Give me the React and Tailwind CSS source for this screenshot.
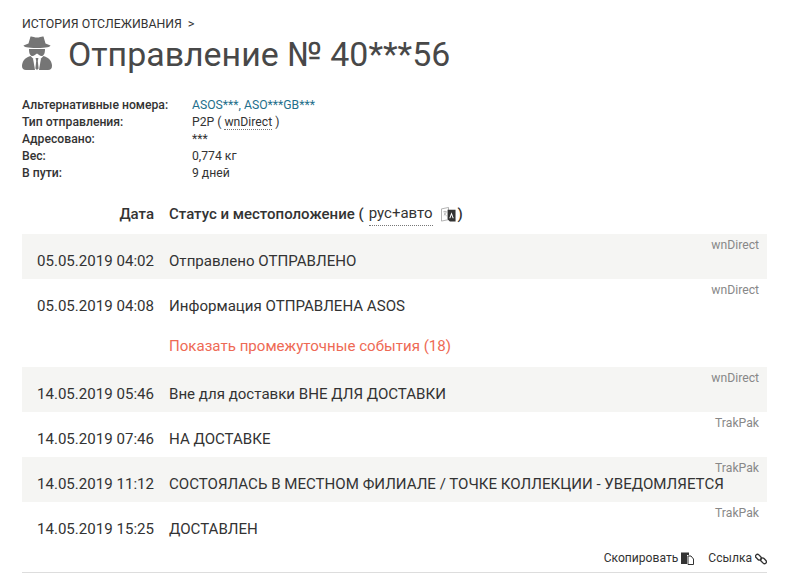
const sans = "font-['Roboto','Liberation_Sans',sans-serif]";

const info = [
  ['Альтернативные номера:', <span className="text-[#1f6f8b]">ASOS***, ASO***GB***</span>],
  ['Тип отправления:', <span>P2P ( <span className="border-b border-dotted border-[#777]">wnDirect</span> )</span>],
  ['Адресовано:', '***'],
  ['Вес:', '0,774 кг'],
  ['В пути:', '9 дней'],
];

const Row = ({ date, text, carrier, shaded }) => (
  <div className={`relative flex h-[45px] items-end pb-[6px] text-[15.08px] text-[#333] ${shaded ? 'bg-[#f5f5f3]' : ''}`}>
    <div className="w-[132px] text-right">{date}</div>
    <div className="ml-[15px]">{text}</div>
    <div className="absolute right-2 top-[2px] text-[12.2px] text-[#888]">{carrier}</div>
  </div>
);

const SpyIcon = () => (
  <svg viewBox="0 0 30 34" className="mb-[5px] h-[34px] w-[30px]" fill="#757575">
    {/* hat */}
    <path d="M8.5 0.5 C10 0 12.5 1.5 15 1.5 C17.5 1.5 20 0 21.5 0.5 L23.5 7.5 L28.5 9.5 C28 11 25 12 15 12 C5 12 2 11 1.5 9.5 L6.5 7.5 Z" />
    {/* glasses and face */}
    <path d="M7 13 H23 C23 16 22.5 19.5 20 20 C18 20.3 16.5 18.5 15 17.5 C13.5 18.5 12 20.3 10 20 C7.5 19.5 7 16 7 13 Z" />
    {/* coat */}
    <path d="M8.5 20 C2.5 21.5 0 26 0 30 C0 32.5 1.5 34 4 34 H13 L11 22.5 Z" />
    <path d="M21.5 20 C27.5 21.5 30 26 30 30 C30 32.5 28.5 34 26 34 H17 L19 22.5 Z" />
    {/* tie */}
    <path d="M13.6 22 H16.4 L15.8 25 L16.6 32.5 L15 34 L13.4 32.5 L14.2 25 Z" />
  </svg>
);

const TranslateIcon = () => (
  <svg viewBox="0 0 16 16" className="h-[15px] w-[15px]">
    <path d="M0.5 2 L8 0.5 V13.5 L0.5 15 Z" fill="#fff" stroke="#999" strokeWidth="0.8" />
    <path d="M2.5 5 H6 M4.2 4 V5 M3 9 C4.5 8 5.5 6.5 5.5 5 M3.5 6 C4 8 5 9 6 9.5" stroke="#999" strokeWidth="0.7" fill="none" />
    <path d="M7 3 H15.5 V15.5 H9.5 L7 13 Z" fill="#333" />
    <path d="M11.2 5.5 L13.6 12 H12.4 L11.2 8.6 L10 12 H8.8 Z" fill="#fff" />
  </svg>
);

const CopyIcon = () => (
  <svg viewBox="0 0 13 13" className="h-[13px] w-[13px]">
    <path d="M0 0.5 H8 V3 H6 V12 H0 Z" fill="#333" />
    <path d="M7 4 H10 L12.5 7 V12.5 H7 Z" fill="#fff" stroke="#333" strokeWidth="1" />
  </svg>
);

const LinkIcon = () => (
  <svg viewBox="0 0 13 13" className="ml-[3px] h-[12px] w-[12px]" fill="none" stroke="#333" strokeWidth="1.5">
    <rect x="0.2" y="2.4" width="7" height="4.2" rx="2.1" transform="rotate(45 3.7 4.5)" />
    <rect x="5.8" y="6.4" width="7" height="4.2" rx="2.1" transform="rotate(45 9.3 8.5)" />
  </svg>
);

export default function App() {
  return (
    <div className={`${sans} h-[586px] w-[790px] overflow-hidden bg-white pl-[22px] pr-[23px] pt-[15px] text-[#333]`}>
      <div className="flex h-[18px] items-center text-[12.3px] text-[#333]">
        ИСТОРИЯ ОТСЛЕЖИВАНИЯ
        <span className="ml-[6px] text-[13px]">&gt;</span>
      </div>

      <div className="-mt-[1px] flex h-[46px] items-center">
        <SpyIcon />
        <h1 className="ml-[16px] text-[33.9px] leading-none text-[#484848]">Отправление № 40***56</h1>
      </div>

      <div className="mt-[19px] text-[12.2px] leading-[17px]">
        {info.map(([label, value]) => (
          <div key={label} className="flex">
            <div className="w-[170px] font-medium">{label}</div>
            <div>{value}</div>
          </div>
        ))}
      </div>

      <div className="mt-[17px] flex h-[30px] items-center text-[15px] font-medium">
        <div className="w-[132px] text-right">Дата</div>
        <div className="ml-[15px] flex items-center">
          Статус и местоположение (
          <span className="ml-[5px] border-b border-dotted border-[#777] font-normal">рус+авто</span>
          <span className="ml-[8px] mr-[2px]"><TranslateIcon /></span>
          )
        </div>
      </div>

      <div className="mt-[5px]">
        <Row shaded date="05.05.2019 04:02" text="Отправлено ОТПРАВЛЕНО" carrier="wnDirect" />
        <Row date="05.05.2019 04:08" text="Информация ОТПРАВЛЕНА ASOS" carrier="wnDirect" />
        <div className="flex h-[43px] items-center pl-[147px] pt-[1px] text-[15.08px] text-[#ee6a55]">
          Показать промежуточные события (18)
        </div>
        <Row shaded date="14.05.2019 05:46" text="Вне для доставки ВНЕ ДЛЯ ДОСТАВКИ" carrier="wnDirect" />
        <Row date="14.05.2019 07:46" text="НА ДОСТАВКЕ" carrier="TrakPak" />
        <Row shaded date="14.05.2019 11:12" text="СОСТОЯЛАСЬ В МЕСТНОМ ФИЛИАЛЕ / ТОЧКЕ КОЛЛЕКЦИИ - УВЕДОМЛЯЕТСЯ" carrier="TrakPak" />
        <Row date="14.05.2019 15:25" text="ДОСТАВЛЕН" carrier="TrakPak" />
      </div>

      <div className="flex h-[26px] items-center justify-end border-b border-[#ddd] pb-[2px] text-[12.1px]">
        <span>Скопировать</span>
        <span className="ml-[3px]"><CopyIcon /></span>
        <span className="ml-[14px]">Ссылка</span>
        <LinkIcon />
      </div>
    </div>
  );
}
